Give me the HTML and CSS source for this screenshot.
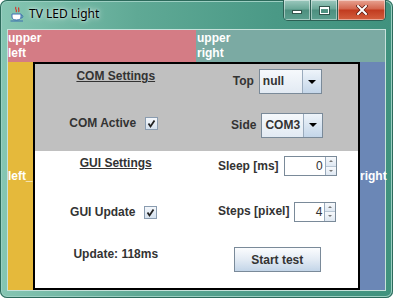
FILE: index.html
```html
<!DOCTYPE html>
<html lang="en">
<head>
    <meta charset="UTF-8">
    <title>TV LED Light</title>
    <link rel="stylesheet" href="styles.css">
</head>
<body>
    <div class="window">
        <div class="titlebar">
            <svg class="app-icon" width="16" height="16" viewBox="0 0 16 16">
                <path d="M7 1 C5 3 9 4 7 6 M10 1.5 C8.5 3 11 4 9.5 6" stroke="#d0392b" stroke-width="1.2" fill="none"/>
                <path d="M3 8 H12 V11 C12 13 10 14 7.5 14 C5 14 3 13 3 11 Z" fill="#fff" stroke="#3d6fb0" stroke-width="1"/>
                <path d="M12 9 C14.5 9 14.5 12 12 12" stroke="#3d6fb0" stroke-width="1" fill="none"/>
                <path d="M1.5 15 H14" stroke="#3d6fb0" stroke-width="1.2"/>
            </svg>
            <span class="title">TV LED Light</span>
            <div class="caption-buttons">
                <div class="cap-btn min"><span class="min-glyph"></span></div>
                <div class="cap-btn max"><span class="max-glyph"></span></div>
                <div class="cap-btn close">
                    <svg width="12" height="10" viewBox="0 0 12 10">
                        <path d="M2 1 L10 9 M10 1 L2 9" stroke="#5a1a10" stroke-width="3.4" stroke-linecap="square"/>
                        <path d="M2 1 L10 9 M10 1 L2 9" stroke="#fff" stroke-width="2" stroke-linecap="square"/>
                    </svg>
                </div>
            </div>
        </div>

        <div class="client">
            <div class="north">
                <div class="region upper-left">upper<br>left</div>
                <div class="region upper-right">upper<br>right</div>
            </div>
            <div class="side west">left_</div>

            <div class="center">
                <div class="section com">
                    <div class="cell"><span class="label heading">COM Settings</span></div>
                    <div class="cell">
                        <span class="label">Top</span>
                        <div class="combo combo-top"><span class="combo-text">null</span><span class="combo-arrow"></span></div>
                    </div>
                    <div class="cell">
                        <span class="label">COM Active</span>
                        <span class="checkbox"><span class="check-box"><svg width="11" height="11" viewBox="0 0 11 11"><path d="M2.5 5.5 L4.5 8.5 L8.5 2.5" stroke="#222" stroke-width="1.8" fill="none"/></svg></span></span>
                    </div>
                    <div class="cell">
                        <span class="label">Side</span>
                        <div class="combo combo-side"><span class="combo-text">COM3</span><span class="combo-arrow"></span></div>
                    </div>
                </div>

                <div class="section gui">
                    <div class="cell"><span class="label heading">GUI Settings</span></div>
                    <div class="cell">
                        <span class="label">Sleep [ms]</span>
                        <div class="spinner spinner-sleep">
                            <span class="spinner-value">0</span>
                            <span class="spinner-buttons"><span class="spin-up"></span><span class="spin-down"></span></span>
                        </div>
                    </div>
                    <div class="cell">
                        <span class="label">GUI Update</span>
                        <span class="checkbox"><span class="check-box"><svg width="11" height="11" viewBox="0 0 11 11"><path d="M2.5 5.5 L4.5 8.5 L8.5 2.5" stroke="#222" stroke-width="1.8" fill="none"/></svg></span></span>
                    </div>
                    <div class="cell">
                        <span class="label">Steps [pixel]</span>
                        <div class="spinner spinner-steps">
                            <span class="spinner-value">4</span>
                            <span class="spinner-buttons"><span class="spin-up"></span><span class="spin-down"></span></span>
                        </div>
                    </div>
                    <div class="cell"><span class="label">Update: 118ms</span></div>
                    <div class="cell"><button class="button">Start test</button></div>
                </div>
            </div>

            <div class="side east">right</div>
        </div>
    </div>
</body>
</html>
```

FILE: styles.css
```css
body {
    margin: 0;
    background-color: #ffffff;
    font-family: "Liberation Sans", Arial, sans-serif;
}
.window {
    width: 393px;
    height: 298px;
    border-radius: 7px;
    background: linear-gradient(90deg, #86c6b3 0, #5fa995 35%, #4a9986 70%, #40927e 100%);
    box-shadow: inset 0 0 0 1px #2c6a5b, inset 0 0 0 2px #9ccfc2;
    overflow: hidden;
}
.titlebar {
    display: flex;
    align-items: flex-start;
    height: 30px;
    padding-left: 9px;
}
.app-icon {
    margin-top: 6px;
}
.title {
    margin-left: 4px;
    margin-top: 5px;
    font-family: "Noto Sans", sans-serif;
    font-size: 12px;
    line-height: 17px;
    color: #000;
    text-shadow: 0 0 6px rgba(255, 255, 255, 0.9), 0 0 3px rgba(255, 255, 255, 0.7);
}
.caption-buttons {
    display: flex;
    margin-left: auto;
    margin-right: 7px;
    height: 20px;
    border: 1px solid #2c5f54;
    border-top: none;
    border-radius: 0 0 5px 5px;
    overflow: hidden;
}
.cap-btn {
    display: flex;
    align-items: center;
    justify-content: center;
    box-shadow: inset 0 0 0 1px rgba(255, 255, 255, 0.45);
}
.min, .max {
    width: 26px;
    background: linear-gradient(#9cc9be, #6aa797 45%, #4d8f7f 50%, #5b9f8f);
    border-right: 1px solid #2c5f54;
}
.min-glyph {
    width: 8px;
    height: 2px;
    margin-top: 4px;
    background: #fff;
    border: 1px solid #33554d;
}
.max-glyph {
    width: 7px;
    height: 4px;
    border: 1px solid #fff;
    border-top-width: 2px;
    outline: 1px solid #33554d;
}
.close {
    width: 47px;
    background: linear-gradient(#e8a493, #d3654d 45%, #c13b1f 50%, #d4603f);
}
.client {
    display: grid;
    grid-template-columns: 25px 327px 25px;
    grid-template-rows: 32px 228px;
    margin-left: 8px;
    width: 377px;
    box-shadow: 0 0 0 1px #c6e1da;
}
.north {
    grid-column: 1 / -1;
    display: grid;
    grid-template-columns: 188px 189px;
}
.region, .side {
    color: #ffffff;
    font-weight: bold;
    font-size: 12px;
    line-height: 15px;
    display: flex;
    align-items: center;
}
.upper-left {
    background-color: #d47c85;
}
.upper-right {
    background-color: #7baaa3;
    padding-left: 1px;
}
.west {
    background-color: #e5b93b;
}
.east {
    background-color: #6b87b6;
}
.center {
    display: flex;
    flex-direction: column;
    border: 2px solid #000;
}
.section {
    display: grid;
    grid-template-columns: 1fr 1fr;
}
.com {
    height: 87px;
    grid-template-rows: 1fr 1fr;
    background-color: #c0c0c0;
}
.gui {
    flex: 1;
    grid-template-rows: 1fr 1fr 1fr;
    background-color: #ffffff;
}
.cell {
    display: flex;
    flex-wrap: wrap;
    justify-content: center;
    align-items: center;
    align-content: flex-start;
    gap: 5px;
    padding-top: 5px;
}
.label {
    font-size: 12px;
    font-weight: bold;
    line-height: 15px;
    color: #333;
}
.heading {
    text-decoration: underline;
}
.combo {
    display: flex;
    flex-shrink: 0;
    height: 25px;
    box-sizing: border-box;
    border: 1px solid #7a8a99;
}
.combo-top {
    width: 63px;
}
.combo-side {
    width: 62px;
}
.combo-text {
    flex: 1;
    padding-left: 3px;
    font-size: 12px;
    font-weight: bold;
    line-height: 23px;
    color: #333;
    white-space: nowrap;
    background: linear-gradient(#f6f9fc, #e2eaf3);
}
.combo-arrow {
    width: 18px;
    flex-shrink: 0;
    display: flex;
    align-items: center;
    justify-content: center;
    border-left: 1px solid #9aabbd;
    background: linear-gradient(#eef4fa, #c4d6e9);
}
.combo-arrow::after {
    content: "";
    border-left: 4px solid transparent;
    border-right: 4px solid transparent;
    border-top: 4px solid #000;
}
.checkbox {
    width: 21px;
    height: 21px;
    display: flex;
    align-items: center;
    justify-content: center;
}
.check-box {
    width: 13px;
    height: 13px;
    box-sizing: border-box;
    border: 1px solid #8a9cb0;
    background: linear-gradient(#f4f7fb, #d5e1ee);
    display: flex;
    align-items: center;
    justify-content: center;
}
.spinner {
    display: flex;
    height: 20px;
    box-sizing: border-box;
    border: 1px solid #7a8a99;
    background: #fff;
}
.spinner-sleep {
    width: 53px;
}
.spinner-steps {
    width: 42px;
}
.spinner-value {
    flex: 1;
    text-align: right;
    padding-right: 2px;
    font-size: 12px;
    line-height: 18px;
    color: #333;
}
.spinner-buttons {
    width: 10px;
    display: flex;
    flex-direction: column;
    border-left: 1px solid #9aabbd;
}
.spin-up, .spin-down {
    flex: 1;
    display: flex;
    align-items: center;
    justify-content: center;
    background: linear-gradient(#f7f9fc, #dfe8f2);
}
.spin-up {
    border-bottom: 1px solid #b8c6d4;
}
.spin-up::after {
    content: "";
    border-left: 2px solid transparent;
    border-right: 2px solid transparent;
    border-bottom: 2px solid #777;
}
.spin-down::after {
    content: "";
    border-left: 2px solid transparent;
    border-right: 2px solid transparent;
    border-top: 2px solid #777;
}
.button {
    width: 87px;
    height: 25px;
    padding: 0;
    border: 1px solid #7a8a99;
    background: linear-gradient(#fbfcfe, #e3ebf4 50%, #c3d5e8);
    font-family: "Liberation Sans", Arial, sans-serif;
    font-size: 12px;
    font-weight: bold;
    color: #333;
}
```
